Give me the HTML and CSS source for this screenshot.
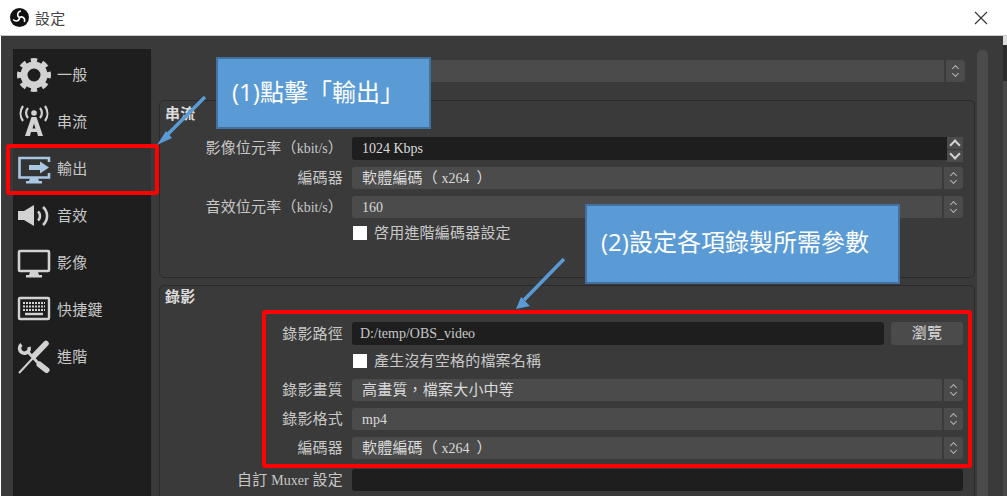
FILE: index.html
```html
<!DOCTYPE html>
<html lang="zh-Hant">

<head>
    <meta charset="UTF-8">
    <title>設定</title>
    <link rel="stylesheet" href="styles.css">
</head>

<body>
    <div class="titlebar">
        <svg class="logo" viewBox="0 0 20 20">
            <circle cx="10" cy="10" r="10" fill="#111" />
            <g fill="none" stroke="#fff" stroke-width="1.600">
                <path d="M10 10C7 8.500 7.500 4 11.500 3.200" />
                <path d="M10 10C7 8.500 7.500 4 11.500 3.200" transform="rotate(120 10 10)" />
                <path d="M10 10C7 8.500 7.500 4 11.500 3.200" transform="rotate(240 10 10)" />
            </g>
        </svg>
        <span class="title">設定</span>
        <svg class="close" viewBox="0 0 14 14">
            <path d="M1 1l12 12M13 1L1 13" stroke="#333" stroke-width="1.100" fill="none" />
        </svg>
    </div>

    <div class="window">
        <div class="sidebar">
            <div class="nav-item">
                <svg class="nav-icon" viewBox="0 0 34 34">
                    <circle cx="17" cy="17" r="10" stroke="#d2d2d2" stroke-width="7" fill="none" />
                    <circle cx="17" cy="17" r="14.500" stroke="#d2d2d2" stroke-width="5" fill="none" pathLength="80" stroke-dasharray="5.500 4.500" stroke-dashoffset="2.750" />
                </svg>
                <span>一般</span>
            </div>
            <div class="nav-item">
                <svg class="nav-icon" viewBox="0 0 34 34">
                    <circle cx="17" cy="8" r="2.800" fill="#d2d2d2" />
                    <path d="M11 3a7.500 7.500 0 0 0 0 10M23 3a7.500 7.500 0 0 1 0 10M6 1a13 13 0 0 0 0 15M28 1a13 13 0 0 1 0 15" stroke="#d2d2d2" stroke-width="2.200" fill="none" />
                    <path d="M14.500 12h5l6.500 19h-5l-1-4h-6l-1 4H8zM15.500 23.500h3l-1.500-5z" fill="#d2d2d2" fill-rule="evenodd" />
                </svg>
                <span>串流</span>
            </div>
            <div class="nav-item nav-active">
                <svg class="nav-icon" viewBox="0 0 34 34">
                    <path d="M32 10V6H2.500v19.500H32V21" stroke="#a9c6e3" stroke-width="2.600" fill="none" />
                    <path d="M13 26h8l1 3h3v2.500H9V29h3z" fill="#a9c6e3" />
                    <path d="M12 13h11V9.500l9 6-9 6V18H12z" fill="#a9c6e3" />
                </svg>
                <span>輸出</span>
            </div>
            <div class="nav-item">
                <svg class="nav-icon" viewBox="0 0 34 34">
                    <path d="M1 12h6l10-6v21l-10-6H1z" fill="#d2d2d2" />
                    <path d="M21 12.500a6 6 0 0 1 0 9M26 8a12 12 0 0 1 0 18" stroke="#d2d2d2" stroke-width="2.600" fill="none" />
                </svg>
                <span>音效</span>
            </div>
            <div class="nav-item">
                <svg class="nav-icon" viewBox="0 0 34 34">
                    <rect x="2" y="5" width="30" height="20" rx="1" stroke="#d2d2d2" stroke-width="2.600" fill="none" />
                    <path d="M13 26h8l1 3h3v2.500H9V29h3z" fill="#d2d2d2" />
                </svg>
                <span>影像</span>
            </div>
            <div class="nav-item">
                <svg class="nav-icon" viewBox="0 0 34 34">
                    <rect x="2" y="5" width="30" height="21" rx="1" stroke="#d2d2d2" stroke-width="2.400" fill="none" />
                    <path d="M6 10h22M6 13.500h22M6 17h22" stroke="#d2d2d2" stroke-width="2" stroke-dasharray="2 1" fill="none" />
                    <path d="M8 21h18" stroke="#d2d2d2" stroke-width="2.400" fill="none" />
                </svg>
                <span>快捷鍵</span>
            </div>
            <div class="nav-item">
                <svg class="nav-icon" viewBox="0 0 34 34">
                    <path d="M4.500 4.500A4.800 4.800 0 1 0 12 7" stroke="#d2d2d2" stroke-width="3.600" fill="none" />
                    <path d="M11 12L22 24" stroke="#d2d2d2" stroke-width="2.800" fill="none" />
                    <path d="M22.500 24.500L29.500 30" stroke="#d2d2d2" stroke-width="6" stroke-linecap="round" fill="none" />
                    <path d="M29 3.500L17 16" stroke="#d2d2d2" stroke-width="5.500" stroke-linecap="round" fill="none" />
                    <path d="M16 18L2 33" stroke="#d2d2d2" stroke-width="2" fill="none" />
                </svg>
                <span>進階</span>
            </div>
        </div>

        <div class="content">
            <div class="top-row">
                <div class="select">
                    <span class="select-text"></span>
                    <span class="arrows"><i class="up"></i><i class="down"></i></span>
                </div>
            </div>

            <div class="group group-stream">
                <div class="group-title">串流</div>
                <div class="form">
                    <label>影像位元率（<span class="en">kbit/s</span>）</label>
                    <div class="spin">
                        <span class="spin-text"><span class="en">1024 Kbps</span></span>
                        <span class="spin-btns">
                            <b><i class="up big"></i></b>
                            <b><i class="down big"></i></b>
                        </span>
                    </div>
                    <label>編碼器</label>
                    <div class="select"><span class="select-text">軟體編碼（<span class="en"> x264  </span>）</span><span class="arrows"><i class="up"></i><i class="down"></i></span></div>
                    <label>音效位元率（<span class="en">kbit/s</span>）</label>
                    <div class="select"><span class="select-text"><span class="en">160</span></span><span class="arrows"><i class="up"></i><i class="down"></i></span></div>
                    <label></label>
                    <div class="check"><span class="box"></span>啓用進階編碼器設定</div>
                </div>
            </div>

            <div class="group group-record">
                <div class="group-title">錄影</div>
                <div class="form">
                    <label>錄影路徑</label>
                    <div class="path-row">
                        <div class="input"><span class="en">D:/temp/OBS_video</span></div>
                        <div class="button">瀏覽</div>
                    </div>
                    <label></label>
                    <div class="check"><span class="box"></span>產生沒有空格的檔案名稱</div>
                    <label>錄影畫質</label>
                    <div class="select"><span class="select-text">高畫質，檔案大小中等</span><span class="arrows"><i class="up"></i><i class="down"></i></span></div>
                    <label>錄影格式</label>
                    <div class="select"><span class="select-text"><span class="en">mp4</span></span><span class="arrows"><i class="up"></i><i class="down"></i></span></div>
                    <label>編碼器</label>
                    <div class="select"><span class="select-text">軟體編碼（<span class="en"> x264  </span>）</span><span class="arrows"><i class="up"></i><i class="down"></i></span></div>
                    <label class="muxer">自訂 <span class="en">Muxer</span> 設定</label>
                    <div class="input muxer"></div>
                </div>
            </div>
        </div>

        <div class="scrollbar"></div>
        <div class="edge"></div>
    </div>

    <!-- annotations on top of the screenshot -->
    <div class="callout callout-one">(1)點擊「輸出」</div>
    <div class="callout callout-two">(2)設定各項錄製所需參數</div>
    <div class="red-box red-nav"></div>
    <div class="red-box red-form"></div>
    <svg class="arrows-layer" viewBox="0 0 1007 496">
        <path d="M205 97L165 137M564 259L524 300" stroke="#5b9bd5" stroke-width="3.500" fill="none" />
        <path d="M157 145l9-14 6 7zM516 309l5-12 9 9z" fill="#5b9bd5" />
    </svg>
</body>

</html>
```

FILE: styles.css
```css
html,
body {
    height: 496px;
    overflow: hidden;
}

body {
    margin: 0;
    background-color: #fff;
    font-family: "Liberation Serif", "Noto Sans CJK TC", serif;
    font-size: 15px;
    letter-spacing: 0.2px;
    color: #c8c8c8;
    position: relative;
}

.en {
    font-size: 14px;
    letter-spacing: 0;
}

.titlebar {
    height: 35px;
    display: flex;
    align-items: center;
    padding: 0 19px 0 10px;
    border-bottom: 1px solid #c8c8c8;
}

.logo {
    width: 19px;
    height: 19px;
    margin-right: 6px;
}

.title {
    color: #444;
    font-family: "Noto Sans CJK TC", sans-serif;
}

.close {
    width: 14px;
    height: 14px;
    margin-left: auto;
    margin-right: 0;
}

.window {
    display: flex;
    margin-left: 1px;
    height: 460px;
    background-color: #3a3a3a;
    padding-top: 13px;
    box-sizing: border-box;
}

.sidebar {
    width: 138px;
    margin-left: 12px;
    padding-top: 2px;
    background-color: #1e1e1e;
    flex-shrink: 0;
}

.nav-item {
    height: 47px;
    display: flex;
    align-items: center;
    padding-left: 4px;
    gap: 6px;
}

.nav-item span {
    padding-bottom: 2px;
}

.nav-active {
    background-color: #333;
}

.nav-icon {
    width: 34px;
    height: 34px;
}

.content {
    width: 816px;
    margin-left: 8px;
    flex-shrink: 0;
}

.top-row {
    padding: 11px 10px 0 193px;
    height: 40px;
    box-sizing: border-box;
    margin-bottom: 11px;
}

.group {
    border: 1px solid #2a2a2a;
    border-radius: 5px;
    box-sizing: border-box;
}

.group-stream {
    height: 178px;
    margin-bottom: 7px;
}

.group-record {
    height: 220px;
}

.group-title {
    padding-left: 5px;
    height: 36px;
    box-sizing: border-box;
    color: #dcdcdc;
    font-weight: bold;
    line-height: 20px;
}

.group-stream .group-title {
    padding-top: 3px;
}

.group-record .group-title {
    padding-top: 1px;
}

.form {
    display: grid;
    grid-template-columns: 183px 1fr;
    column-gap: 9px;
    padding-right: 11px;
    row-gap: 7px;
    align-items: center;
}

label {
    text-align: right;
    white-space: nowrap;
    line-height: 20px;
}

.select,
.input,
.spin {
    height: 22px;
    line-height: 20px;
    border-radius: 3px;
    display: flex;
    align-items: center;
    box-sizing: border-box;
}

.select {
    background-color: #4b4b4b;
}

.select-text {
    flex: 1;
    padding-left: 10px;
    color: #dadada;
    white-space: pre;
}

.arrows {
    width: 19px;
    height: 100%;
    border-left: 2px solid #3a3a3a;
    display: flex;
    flex-direction: column;
    align-items: center;
    justify-content: center;
}

.up,
.down {
    display: block;
    box-sizing: border-box;
    width: 5px;
    height: 5px;
    border-left: 1px solid #b4b4b4;
    border-top: 1px solid #b4b4b4;
}

.up {
    transform: rotate(45deg);
}

.down {
    transform: rotate(225deg);
}

.big {
    width: 8px;
    height: 8px;
    border-width: 2px;
    border-color: #d2d2d2;
}

.input {
    background-color: #1e1e1e;
    padding-left: 8px;
    color: #c8c8c8;
    flex: 1;
}

.muxer {
    margin-top: 3px;
}

.spin {
    height: 23px;
    background-color: #1e1e1e;
}

.spin-text {
    flex: 1;
    padding-left: 10px;
    color: #dadada;
}

.spin-btns {
    width: 16px;
    height: 100%;
    display: flex;
    flex-direction: column;
    background-color: #3a3a3a;
    gap: 1px;
}

.spin-btns b {
    flex: 1;
    background-color: #4b4b4b;
    display: flex;
    align-items: center;
    justify-content: center;
}

.spin-btns .up {
    margin-top: 4px;
}

.spin-btns .down {
    margin-bottom: 4px;
}

.check {
    height: 16px;
    line-height: 16px;
    display: flex;
    align-items: center;
    color: #c8c8c8;
}

.box {
    width: 14px;
    height: 14px;
    background-color: #fff;
    margin: 0 7px 0 1px;
}

.group-record .check {
    margin-bottom: 3px;
}

.path-row {
    display: flex;
    gap: 7px;
    margin-bottom: 1px;
}

.path-row .input {
    height: 23px;
}

.button {
    width: 72px;
    height: 23px;
    background-color: #4b4b4b;
    border-radius: 3px;
    text-align: center;
    line-height: 23px;
    color: #dadada;
}

.scrollbar {
    width: 11px;
    margin: 1px 0 0 2px;
    background-color: #4b4b4b;
    border-radius: 5px 5px 0 0;
}

.edge {
    width: 4px;
    margin: -13px 0 0 auto;
    background: linear-gradient(#ddd 0, #ddd 9px, #2b2b2b 9px, #2b2b2b 45px, #484848 45px);
}

.callout {
    position: absolute;
    box-sizing: border-box;
    background-color: #5b9bd5;
    border: 2px solid #41719c;
    color: #fff;
    font-family: "Open Sans", "Noto Sans CJK TC", sans-serif;
    font-size: 24px;
    letter-spacing: 0;
    line-height: 24px;
    display: flex;
    align-items: center;
    white-space: nowrap;
}

.callout-one {
    left: 216px;
    top: 57px;
    width: 215px;
    height: 72px;
    padding: 0 0 3px 14px;
}

.callout-two {
    left: 585px;
    top: 204px;
    width: 315px;
    height: 80px;
    padding: 0 0 4px 14px;
}

.red-box {
    position: absolute;
    box-sizing: border-box;
    border: 4px solid #f00;
    border-radius: 3px;
}

.red-nav {
    left: 6px;
    top: 144px;
    width: 153px;
    height: 51px;
}

.red-form {
    left: 262px;
    top: 310px;
    width: 710px;
    height: 158px;
}

.arrows-layer {
    position: absolute;
    left: 0;
    top: 0;
    width: 1007px;
    height: 496px;
}
```
